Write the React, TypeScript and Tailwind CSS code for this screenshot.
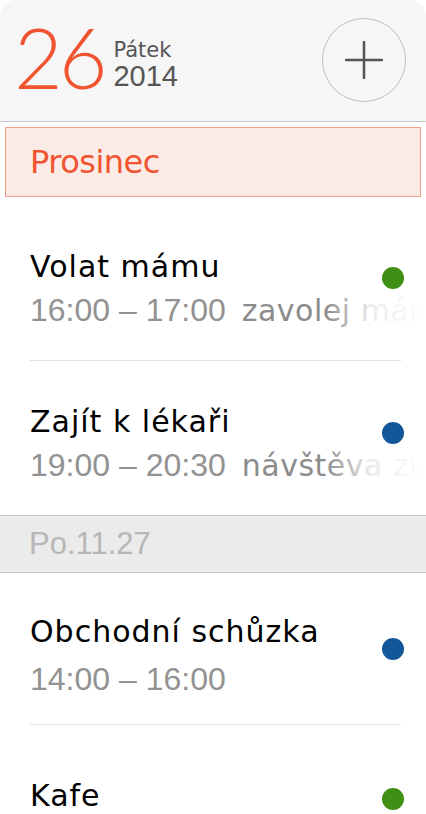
import React from 'react';

const TITLE_FONT = "font-['DejaVu_Sans',sans-serif]";

type Item = {
  title: string;
  time: string;
  note?: string;
  dot: string;
  pt: number;
  gap: number;
  pb: number;
  dotTop: number;
};

const EventRow: React.FC<{ item: Item; divider: boolean }> = ({ item, divider }) => (
  <div>
    <div style={{ paddingTop: item.pt, paddingBottom: item.pb }}>
      <div className="flex items-start h-[36px] pl-[30px] pr-[22px]">
        <div className={`flex-1 ${TITLE_FONT} text-[30px] leading-[36px] tracking-[1px] text-black whitespace-nowrap`}>
          {item.title}
        </div>
        <span
          className={`block w-[22px] h-[22px] rounded-full shrink-0 ${item.dot}`}
          style={{ marginTop: item.dotTop }}
        ></span>
      </div>
      {item.time && (
        <div className="relative pl-[30px] h-[40px] whitespace-nowrap overflow-hidden" style={{ marginTop: item.gap }}>
          <span className="font-['Liberation_Sans',Arial,sans-serif] text-[32px] leading-[40px] text-[#929292]">
            {item.time}
          </span>
          {item.note && (
            <span className={`${TITLE_FONT} ml-[16px] text-[30px] leading-[40px] tracking-[0.5px] text-[#8c8c8c]`}>
              {item.note}
            </span>
          )}
          {item.note && (
            <div className="absolute right-0 top-0 bottom-0 w-[100px] bg-[linear-gradient(to_right,rgba(255,255,255,0)_0%,rgba(255,255,255,0.82)_45%,#fff_100%)]"></div>
          )}
        </div>
      )}
    </div>
    {divider && <div className="ml-[30px] mr-[25px] h-px bg-[#e2e2e2]"></div>}
  </div>
);

const App: React.FC = () => {
  const first: Item[] = [
    { title: 'Volat mámu', time: '16:00 – 17:00', note: 'zavolej mámu', dot: 'bg-[#3f8f14]', pt: 52, gap: 5, pb: 30, dotTop: 18 },
    { title: 'Zajít k lékaři', time: '19:00 – 20:30', note: 'návštěva zubaře', dot: 'bg-[#11579a]', pt: 43, gap: 5, pb: 30, dotTop: 18 },
  ];
  const second: Item[] = [
    { title: 'Obchodní schůzka', time: '14:00 – 16:00', dot: 'bg-[#11579a]', pt: 41, gap: 9, pb: 25, dotTop: 24 },
    { title: 'Kafe', time: '', dot: 'bg-[#3f8f14]', pt: 53, gap: 5, pb: 30, dotTop: 10 },
  ];

  return (
    <div className="w-[426px] min-h-[814px] bg-white overflow-hidden">
      <div className="h-[122px] bg-[#f6f6f6] rounded-t-[16px] border-b border-[#cacaca] flex items-start pl-[14px] pr-[20px]">
        <div className="mt-[15px] font-['Lato',sans-serif] font-light text-[84px] leading-none tracking-[-4px] text-[#f05330]">
          26
        </div>
        <div className="ml-[10px] mt-[38px] flex flex-col text-[#555]">
          <span className={`${TITLE_FONT} text-[21px] leading-[24px]`}>Pátek</span>
          <span className="font-['Liberation_Sans',Arial,sans-serif] text-[29px] leading-[28px]">2014</span>
        </div>
        <button className="ml-auto mt-[18px] w-[84px] h-[84px] rounded-full border-[1.5px] border-[#bdbdbd] flex items-center justify-center">
          <svg width="38" height="38" viewBox="0 0 38 38">
            <path d="M19 1v36M1 19h36" stroke="#555" strokeWidth="2.5" strokeLinecap="round" />
          </svg>
        </button>
      </div>

      <div className="mx-[5px] mt-[5px] h-[70px] border border-[#f1a08b] bg-[#fbebe6] flex items-center pl-[24px]">
        <span className={`${TITLE_FONT} text-[32px] tracking-[-0.5px] text-[#f05330]`}>Prosinec</span>
      </div>

      {first.map((it, i) => (
        <EventRow key={it.title} item={it} divider={i === 0} />
      ))}

      <div className="h-[58px] bg-[#ebebeb] border-y border-[#c9c9c9] flex items-center pl-[29px]">
        <span className="font-['Liberation_Sans',Arial,sans-serif] text-[31px] text-[#b7b7b7]">Po.11.27</span>
      </div>

      {second.map((it, i) => (
        <EventRow key={it.title} item={it} divider={i === 0} />
      ))}
    </div>
  );
};

export default App;
